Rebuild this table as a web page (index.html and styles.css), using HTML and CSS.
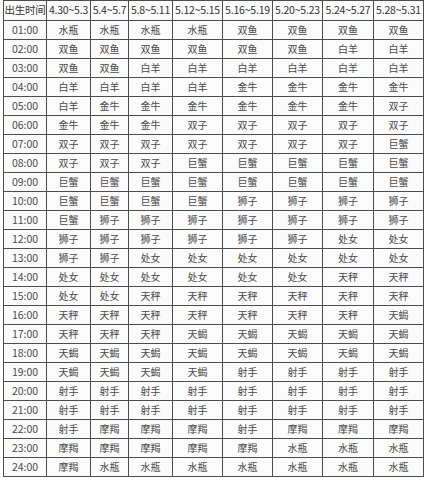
FILE: index.html
```html
<!DOCTYPE html>
<html lang="zh">
<head>
<meta charset="utf-8">
<link rel="stylesheet" href="styles.css">
</head>
<body>
<table class="chart">
<colgroup>
<col class="c-time"><col class="c-a"><col class="c-b"><col class="c-c"><col class="c-d"><col class="c-d"><col class="c-d"><col class="c-e"><col class="c-d">
</colgroup>
<thead>
<tr><th>出生时间</th><th>4.30~5.3</th><th>5.4~5.7</th><th>5.8~5.11</th><th>5.12~5.15</th><th>5.16~5.19</th><th>5.20~5.23</th><th>5.24~5.27</th><th>5.28~5.31</th></tr>
</thead>
<tbody>
<tr><td>01:00</td><td>水瓶</td><td>水瓶</td><td>水瓶</td><td>水瓶</td><td>双鱼</td><td>双鱼</td><td>双鱼</td><td>双鱼</td></tr>
<tr><td>02:00</td><td>双鱼</td><td>双鱼</td><td>双鱼</td><td>双鱼</td><td>双鱼</td><td>双鱼</td><td>白羊</td><td>白羊</td></tr>
<tr><td>03:00</td><td>双鱼</td><td>双鱼</td><td>白羊</td><td>白羊</td><td>白羊</td><td>白羊</td><td>白羊</td><td>白羊</td></tr>
<tr><td>04:00</td><td>白羊</td><td>白羊</td><td>白羊</td><td>白羊</td><td>金牛</td><td>金牛</td><td>金牛</td><td>金牛</td></tr>
<tr><td>05:00</td><td>白羊</td><td>金牛</td><td>金牛</td><td>金牛</td><td>金牛</td><td>金牛</td><td>金牛</td><td>双子</td></tr>
<tr><td>06:00</td><td>金牛</td><td>金牛</td><td>金牛</td><td>双子</td><td>双子</td><td>双子</td><td>双子</td><td>双子</td></tr>
<tr><td>07:00</td><td>双子</td><td>双子</td><td>双子</td><td>双子</td><td>双子</td><td>双子</td><td>双子</td><td>巨蟹</td></tr>
<tr><td>08:00</td><td>双子</td><td>双子</td><td>双子</td><td>巨蟹</td><td>巨蟹</td><td>巨蟹</td><td>巨蟹</td><td>巨蟹</td></tr>
<tr><td>09:00</td><td>巨蟹</td><td>巨蟹</td><td>巨蟹</td><td>巨蟹</td><td>巨蟹</td><td>巨蟹</td><td>巨蟹</td><td>巨蟹</td></tr>
<tr><td>10:00</td><td>巨蟹</td><td>巨蟹</td><td>巨蟹</td><td>巨蟹</td><td>狮子</td><td>狮子</td><td>狮子</td><td>狮子</td></tr>
<tr><td>11:00</td><td>巨蟹</td><td>狮子</td><td>狮子</td><td>狮子</td><td>狮子</td><td>狮子</td><td>狮子</td><td>狮子</td></tr>
<tr><td>12:00</td><td>狮子</td><td>狮子</td><td>狮子</td><td>狮子</td><td>狮子</td><td>狮子</td><td>处女</td><td>处女</td></tr>
<tr><td>13:00</td><td>狮子</td><td>狮子</td><td>处女</td><td>处女</td><td>处女</td><td>处女</td><td>处女</td><td>处女</td></tr>
<tr><td>14:00</td><td>处女</td><td>处女</td><td>处女</td><td>处女</td><td>处女</td><td>处女</td><td>天秤</td><td>天秤</td></tr>
<tr><td>15:00</td><td>处女</td><td>处女</td><td>天秤</td><td>天秤</td><td>天秤</td><td>天秤</td><td>天秤</td><td>天秤</td></tr>
<tr><td>16:00</td><td>天秤</td><td>天秤</td><td>天秤</td><td>天秤</td><td>天秤</td><td>天秤</td><td>天秤</td><td>天蝎</td></tr>
<tr><td>17:00</td><td>天秤</td><td>天秤</td><td>天秤</td><td>天蝎</td><td>天蝎</td><td>天蝎</td><td>天蝎</td><td>天蝎</td></tr>
<tr><td>18:00</td><td>天蝎</td><td>天蝎</td><td>天蝎</td><td>天蝎</td><td>天蝎</td><td>天蝎</td><td>天蝎</td><td>天蝎</td></tr>
<tr><td>19:00</td><td>天蝎</td><td>天蝎</td><td>天蝎</td><td>天蝎</td><td>射手</td><td>射手</td><td>射手</td><td>射手</td></tr>
<tr><td>20:00</td><td>射手</td><td>射手</td><td>射手</td><td>射手</td><td>射手</td><td>射手</td><td>射手</td><td>射手</td></tr>
<tr><td>21:00</td><td>射手</td><td>射手</td><td>射手</td><td>射手</td><td>射手</td><td>射手</td><td>射手</td><td>射手</td></tr>
<tr><td>22:00</td><td>射手</td><td>摩羯</td><td>摩羯</td><td>摩羯</td><td>射手</td><td>摩羯</td><td>摩羯</td><td>摩羯</td></tr>
<tr><td>23:00</td><td>摩羯</td><td>摩羯</td><td>摩羯</td><td>摩羯</td><td>摩羯</td><td>水瓶</td><td>水瓶</td><td>水瓶</td></tr>
<tr><td>24:00</td><td>摩羯</td><td>水瓶</td><td>水瓶</td><td>水瓶</td><td>水瓶</td><td>水瓶</td><td>水瓶</td><td>水瓶</td></tr>
</tbody>
</table>
</body>
</html>
```

FILE: styles.css
```css
html, body {
  margin: 0;
  padding: 0;
  background: #ffffff;
}

body {
  padding: 0 0 0 3px;
}

.chart {
  border-collapse: collapse;
  table-layout: fixed;
  width: 420px;
  font-family: "Noto Sans CJK SC", "Noto Sans", sans-serif;
  color: #4a4a4a;
  background: #fbfbfb;
}

.c-time { width: 43px; }
.c-a { width: 44px; }
.c-b { width: 38px; }
.c-c { width: 44px; }
.c-d { width: 50px; }
.c-e { width: 51px; }

.chart th,
.chart td {
  border: 1px solid #4d4d4d;
  padding: 0;
  text-align: center;
  white-space: nowrap;
  overflow: hidden;
  font-weight: normal;
  line-height: 1;
}

.chart th {
  height: 19px;
  font-size: 10.5px;
  letter-spacing: -0.2px;
  color: #333333;
}

.chart td {
  height: 18px;
  font-size: 10px;
}

.chart td:first-child {
  font-size: 10.5px;
}
```
